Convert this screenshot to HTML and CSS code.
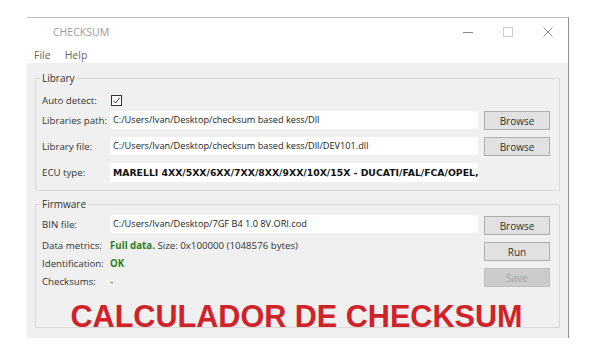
FILE: index.html
```html
<!DOCTYPE html>
<html lang="en">
<head>
<meta charset="utf-8">
<title>CHECKSUM</title>
<link rel="stylesheet" href="styles.css">
</head>
<body>
<div class="window">
  <div class="titlebar">
    <span class="title">CHECKSUM</span>
    <div class="controls">
      <span class="ctl"><svg width="10" height="10" viewBox="0 0 10 10"><path d="M0 5.5h10" stroke="#8a8a8a" stroke-width="1"/></svg></span>
      <span class="ctl"><svg width="10" height="10" viewBox="0 0 10 10"><rect x="0.5" y="0.5" width="9" height="9" fill="none" stroke="#d0d0d0" stroke-width="1"/></svg></span>
      <span class="ctl"><svg width="10" height="10" viewBox="0 0 10 10"><path d="M0.5 0.5L9.5 9.5M9.5 0.5L0.5 9.5" stroke="#8a8a8a" stroke-width="1"/></svg></span>
    </div>
  </div>
  <div class="menubar"><span class="menu">File</span><span class="menu">Help</span></div>
  <div class="client">
    <fieldset class="group lib">
      <legend>Library</legend>
      <div class="row first">
        <span class="label">Auto detect:</span>
        <span class="checkbox"><svg width="9" height="9" viewBox="0 0 10 10"><path d="M1.5 5.2L4 7.8L8.8 1.8" fill="none" stroke="#333" stroke-width="1.1"/></svg></span>
      </div>
      <div class="row">
        <span class="label">Libraries path:</span>
        <span class="field">C:/Users/Ivan/Desktop/checksum based kess/Dll</span>
        <span class="btn">Browse</span>
      </div>
      <div class="row">
        <span class="label">Library file:</span>
        <span class="field">C:/Users/Ivan/Desktop/checksum based kess/Dll/DEV101.dll</span>
        <span class="btn">Browse</span>
      </div>
      <div class="row">
        <span class="label">ECU type:</span>
        <span class="field ecu">MARELLI 4XX/5XX/6XX/7XX/8XX/9XX/10X/15X - DUCATI/FAL/FCA/OPEL,</span>
      </div>
    </fieldset>
    <fieldset class="group fw">
      <legend>Firmware</legend>
      <div class="fwbody">
        <div class="fwleft">
          <div class="fwrow"><span class="label">BIN file:</span><span class="field">C:/Users/Ivan/Desktop/7GF B4 1.0 8V.ORI.cod</span></div>
          <div class="line"><span class="label">Data metrics:</span><span><b class="ok">Full data.</b> Size: 0x100000 (1048576 bytes)</span></div>
          <div class="line"><span class="label">Identification:</span><b class="ok">OK</b></div>
          <div class="line"><span class="label">Checksums:</span><span>-</span></div>
        </div>
        <div class="fwright">
          <span class="btn">Browse</span>
          <span class="btn">Run</span>
          <span class="btn disabled">Save</span>
        </div>
      </div>
      <div class="banner">CALCULADOR DE CHECKSUM</div>
    </fieldset>
  </div>
</div>
</body>
</html>
```
FILE: styles.css
```css
html, body {
  margin: 0;
  padding: 0;
  background: #ffffff;
}
body {
  font-family: "Open Sans", "Noto Sans", sans-serif;
  font-size: 9.7px;
  color: #333333;
}
.window {
  margin: 17px 0 0 27px;
  width: 541px;
  border-top: 1px solid #bdbdbd;
  border-right: 1px solid #8f8f8f;
  background: #ffffff;
}
.titlebar {
  height: 28px;
  display: flex;
  align-items: center;
  justify-content: space-between;
}
.title {
  margin-left: 26px;
  color: #9a9a9a;
  font-size: 10.5px;
}
.controls {
  display: flex;
}
.ctl {
  width: 40px;
  height: 28px;
  display: flex;
  align-items: center;
  justify-content: center;
}
.menubar {
  height: 17px;
  display: flex;
  align-items: center;
  gap: 14px;
  padding-left: 7px;
  color: #666666;
  font-size: 10.5px;
}
.client {
  background: #f0f0f0;
  padding: 8px 8px 10px 8px;
}
.group {
  margin: 0;
  border: 1px solid #d9d9d9;
  padding: 5px 8px 6px 6px;
  min-width: 0;
}
.group.lib {
  padding-bottom: 8px;
}
.group legend {
  padding: 0 2px;
  margin-left: -2px;
  line-height: 14px;
  color: #333333;
  font-size: 10px;
}
.row {
  display: flex;
  align-items: flex-start;
  gap: 6px;
  height: 19px;
  margin-top: 7px;
}
.row.first {
  height: 20px;
  margin-top: 0;
  align-items: center;
  margin-bottom: -6px;
}
.label {
  width: 62px;
  flex: none;
  white-space: nowrap;
  align-self: center;
}
.checkbox {
  width: 11px;
  height: 11px;
  margin-left: 1px;
  border: 1px solid #333333;
  background: #ffffff;
  box-sizing: border-box;
  display: flex;
  align-items: center;
  justify-content: center;
}
.field {
  width: 368px;
  flex: none;
  height: 18px;
  line-height: 18px;
  background: #ffffff;
  padding-left: 3px;
  white-space: nowrap;
  overflow: hidden;
  color: #222222;
  box-sizing: border-box;
  font-size: 9.2px;
}
.ecu {
  height: 19px;
  line-height: 19px;
  font-family: "DejaVu Sans", sans-serif;
  font-weight: bold;
  font-size: 9.3px;
  color: #111111;
}
.btn {
  width: 66px;
  flex: none;
  height: 19px;
  box-sizing: border-box;
  background: #e1e1e1;
  border: 1px solid #adadad;
  display: flex;
  align-items: center;
  justify-content: center;
  color: #333333;
  font-size: 10px;
}
.btn.disabled {
  background: #cccccc;
  border-color: #bfbfbf;
  color: #a0a0a0;
}
.fw {
  margin-top: 6px;
  padding-top: 4px;
  padding-bottom: 0;
}
.fwbody {
  display: flex;
  gap: 6px;
}
.fwleft {
  width: 436px;
  display: flex;
  flex-direction: column;
}
.fwrow {
  display: flex;
  height: 19px;
  align-items: flex-start;
  gap: 6px;
}
.line {
  display: flex;
  height: 18px;
  align-items: center;
  gap: 6px;
}
.fwrow + .line {
  margin-top: 2px;
}
.ok {
  color: #2f7d1f;
  font-weight: bold;
}
.fwright {
  width: 66px;
  display: flex;
  flex-direction: column;
  gap: 7px;
  padding-top: 1px;
}
.banner {
  margin-top: 15px;
  text-align: center;
  font-family: "Liberation Sans", Arial, sans-serif;
  font-weight: bold;
  font-size: 30.6px;
  line-height: 22px;
  color: #cf2229;
}
```
